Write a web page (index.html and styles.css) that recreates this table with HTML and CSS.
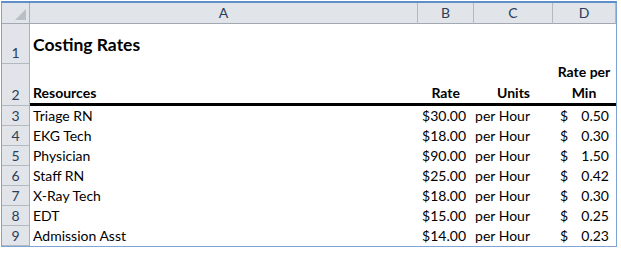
FILE: index.html
```html
<!DOCTYPE html>
<html>
<head>
<meta charset="utf-8">
<link rel="stylesheet" href="styles.css">
</head>
<body>
<div class="sheet">
  <div class="corner"><svg class="tri" width="11" height="11" viewBox="0 0 11 11"><polygon points="11,0 11,11 0,11" fill="#b9bfc7"/></svg></div>
  <div class="colh">A</div>
  <div class="colh">B</div>
  <div class="colh">C</div>
  <div class="colh last">D</div>

  <div class="rowh tall">1</div>
  <div class="cell title">Costing Rates</div>
  <div class="cell"></div>
  <div class="cell"></div>
  <div class="cell"></div>

  <div class="rowh tall">2</div>
  <div class="cell head hA">Resources</div>
  <div class="cell head hB">Rate</div>
  <div class="cell head hC">Units</div>
  <div class="cell head hD">Rate per<br>Min</div>

  <div class="rowh">3</div><div class="cell a">Triage RN</div><div class="cell b">$30.00</div><div class="cell c">per Hour</div><div class="cell d"><span>$</span><span>0.50</span></div>
  <div class="rowh">4</div><div class="cell a">EKG Tech</div><div class="cell b">$18.00</div><div class="cell c">per Hour</div><div class="cell d"><span>$</span><span>0.30</span></div>
  <div class="rowh">5</div><div class="cell a">Physician</div><div class="cell b">$90.00</div><div class="cell c">per Hour</div><div class="cell d"><span>$</span><span>1.50</span></div>
  <div class="rowh">6</div><div class="cell a">Staff RN</div><div class="cell b">$25.00</div><div class="cell c">per Hour</div><div class="cell d"><span>$</span><span>0.42</span></div>
  <div class="rowh">7</div><div class="cell a">X-Ray Tech</div><div class="cell b">$18.00</div><div class="cell c">per Hour</div><div class="cell d"><span>$</span><span>0.30</span></div>
  <div class="rowh">8</div><div class="cell a">EDT</div><div class="cell b">$15.00</div><div class="cell c">per Hour</div><div class="cell d"><span>$</span><span>0.25</span></div>
  <div class="rowh">9</div><div class="cell a">Admission Asst</div><div class="cell b">$14.00</div><div class="cell c">per Hour</div><div class="cell d"><span>$</span><span>0.23</span></div>
</div>
</body>
</html>
```
FILE: styles.css
```css
* { box-sizing: border-box; }
html, body { margin: 0; padding: 0; background: #ffffff; }
body {
  font-family: Lato, "Liberation Sans", sans-serif;
  font-size: 14px;
  color: #000;
}
.sheet {
  margin: 1px 0 0 1px;
  width: 616px;
  display: grid;
  grid-template-columns: 28px 388px 56px 79px 63px;
  grid-template-rows: 21px 40px 42px repeat(7, 20px);
  border: 1px solid #7fa3d3;
  border-top: 2px solid #5f8fcb;
}
.corner {
  background: #e1e5ea;
  border-right: 1px solid #a9b0b8;
  border-bottom: 1px solid #a2a9b2;
  display: flex;
  align-items: flex-end;
  justify-content: flex-end;
  padding: 0 3px 3px 0;
}
.tri { display: block; }
.colh {
  background: #e1e5ea;
  border-right: 1px solid #b3b9c1;
  border-bottom: 1px solid #a2a9b2;
  color: #2b3d58;
  font-size: 14px;
  text-align: center;
  line-height: 20px;
}
.colh.last { border-right: 1px solid #b3b9c1; }
.rowh {
  background: #e1e5ea;
  border-right: 1px solid #a9b0b8;
  border-bottom: 1px solid #b3b9c1;
  color: #2b3d58;
  font-size: 14px;
  text-align: center;
  line-height: 19px;
}
.rowh.tall {
  display: flex;
  align-items: flex-end;
  justify-content: center;
  padding-bottom: 1px;
}
.cell {
  white-space: nowrap;
  line-height: 20px;
}
.title {
  font-weight: 700;
  font-size: 17.5px;
  padding-left: 3px;
  display: flex;
  align-items: center;
  padding-top: 1px;
}
.head {
  font-weight: 700;
  border-bottom: 3px solid #000;
  display: flex;
  align-items: flex-end;
  padding-bottom: 0;
}
.hA { padding-left: 3px; }
.hB { justify-content: flex-end; padding-right: 14px; }
.hC { justify-content: flex-end; padding-right: 23px; }
.hD { justify-content: center; text-align: center; white-space: normal; line-height: 21px; padding-right: 1px; }
.a { padding-left: 3px; }
.b { text-align: right; padding-right: 8px; }
.c { text-align: right; padding-right: 23px; }
.d { display: flex; justify-content: space-between; padding: 0 7px 0 7px; }
```
